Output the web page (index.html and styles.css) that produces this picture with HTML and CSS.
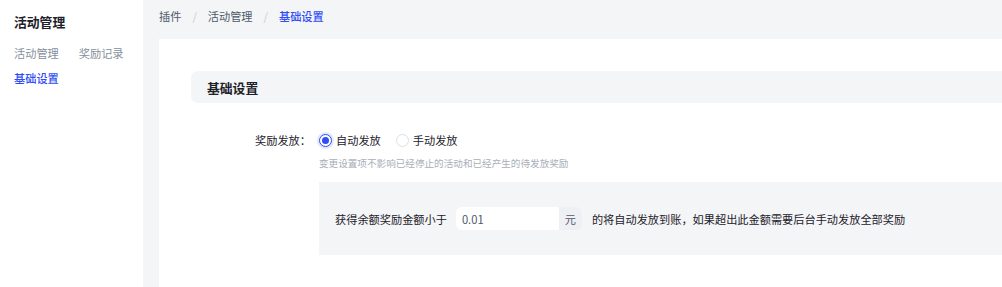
FILE: index.html
```html
<!DOCTYPE html>
<html lang="zh-CN">
<head>
<meta charset="utf-8">
<title>基础设置</title>
<link rel="stylesheet" href="styles.css">
</head>
<body>
<div class="layout">
  <aside class="sidebar">
    <div class="side-title">活动管理</div>
    <div class="side-tabs">
      <span class="side-tab">活动管理</span>
      <span class="side-tab">奖励记录</span>
    </div>
    <div class="side-tab active">基础设置</div>
  </aside>
  <main class="main">
    <nav class="breadcrumb">
      <span class="crumb">插件</span>
      <span class="sep">/</span>
      <span class="crumb">活动管理</span>
      <span class="sep">/</span>
      <span class="crumb current">基础设置</span>
    </nav>
    <section class="card">
      <div class="section-head">基础设置</div>
      <div class="form-row">
        <label class="form-label">奖励发放：</label>
        <div class="form-control">
          <div class="radio-group">
            <span class="radio checked"><span class="dot"></span></span>
            <span class="radio-text">自动发放</span>
            <span class="radio"></span>
            <span class="radio-text">手动发放</span>
          </div>
        </div>
      </div>
      <div class="hint-row">
        <div class="hint">变更设置项不影响已经停止的活动和已经产生的待发放奖励</div>
        <div class="sub-box">
          <span class="sub-text">获得余额奖励金额小于</span>
          <span class="input-group">
            <span class="input">0.01</span>
            <span class="addon">元</span>
          </span>
          <span class="sub-text tail">的将自动发放到账，如果超出此金额需要后台手动发放全部奖励</span>
        </div>
      </div>
    </section>
  </main>
</div>
</body>
</html>
```

FILE: styles.css
```css
html, body {
  margin: 0;
  padding: 0;
  height: 100%;
  overflow: hidden;
  background: #f4f5f7;
  font-family: "Noto Sans CJK SC", "Noto Sans", sans-serif;
  color: #1d2129;
}

.layout {
  display: flex;
  width: 1120px;
  height: 287px;
}

.sidebar {
  width: 143px;
  flex: none;
  background: #fff;
  padding: 12px 0 0 14px;
  box-sizing: border-box;
}

.side-title {
  font-size: 12.8px;
  font-weight: 700;
  line-height: 20px;
  color: #1d2129;
}

.side-tabs {
  display: flex;
  gap: 20px;
  margin-top: 13px;
}

.side-tab {
  font-size: 11.2px;
  line-height: 16px;
  color: #86909c;
}

.side-tab.active {
  display: block;
  margin-top: 9px;
  color: #2f4cf5;
  font-weight: 500;
}

.main {
  flex: 1;
  padding-left: 16px;
  display: flex;
  flex-direction: column;
}

.breadcrumb {
  height: 39px;
  display: flex;
  align-items: flex-start;
  padding-top: 8px;
  box-sizing: border-box;
  font-size: 11.2px;
  line-height: 16px;
}

.crumb {
  color: #4e5969;
}

.crumb.current {
  color: #2f4cf5;
  font-weight: 500;
}

.sep {
  color: #c9cdd4;
  margin: 0 11px;
}

.card {
  flex: 1;
  background: #fff;
  padding: 32px 0 0 32px;
}

.section-head {
  height: 32px;
  background: #f4f5f7;
  border-radius: 7px 0 0 7px;
  padding-left: 16px;
  display: flex;
  align-items: center;
  font-size: 12.8px;
  font-weight: 600;
  color: #1d2129;
}

.form-row {
  display: flex;
  align-items: center;
  margin-top: 26px;
  height: 22px;
}

.form-label {
  width: 120px;
  flex: none;
  text-align: right;
  font-size: 11.2px;
  color: #1d2129;
}

.form-control {
  margin-left: 8px;
}

.radio-group {
  display: flex;
  align-items: center;
  font-size: 11.2px;
}

.radio {
  width: 13px;
  height: 13px;
  box-sizing: border-box;
  border: 1px solid #dcdfe5;
  border-radius: 50%;
  background: #fff;
  display: inline-flex;
  align-items: center;
  justify-content: center;
}

.radio.checked {
  border: 1.5px solid #2f4cf5;
  box-shadow: 0 0 0 2px #e3e8ff;
}

.dot {
  width: 7px;
  height: 7px;
  border-radius: 50%;
  background: #2f4cf5;
}

.radio-text {
  margin-left: 4px;
  margin-right: 15px;
  color: #1d2129;
}

.hint-row {
  margin-left: 128px;
}

.hint {
  font-size: 9.6px;
  line-height: 14px;
  color: #a9aeb8;
  margin-top: 5px;
}

.sub-box {
  margin-top: 12px;
  height: 73px;
  background: #f4f5f7;
  display: flex;
  align-items: center;
  padding-left: 16px;
  font-size: 11.2px;
  color: #1d2129;
}

.input-group {
  display: flex;
  margin-left: 9px;
  height: 23px;
}

.input {
  width: 103px;
  box-sizing: border-box;
  background: #fff;
  border-radius: 6px 0 0 6px;
  padding-left: 6px;
  display: flex;
  align-items: center;
  color: #4e5969;
}

.addon {
  width: 23px;
  background: #eff0f3;
  border-radius: 0 6px 6px 0;
  display: flex;
  align-items: center;
  justify-content: center;
  color: #4e5969;
}

.tail {
  margin-left: 10px;
}
```
